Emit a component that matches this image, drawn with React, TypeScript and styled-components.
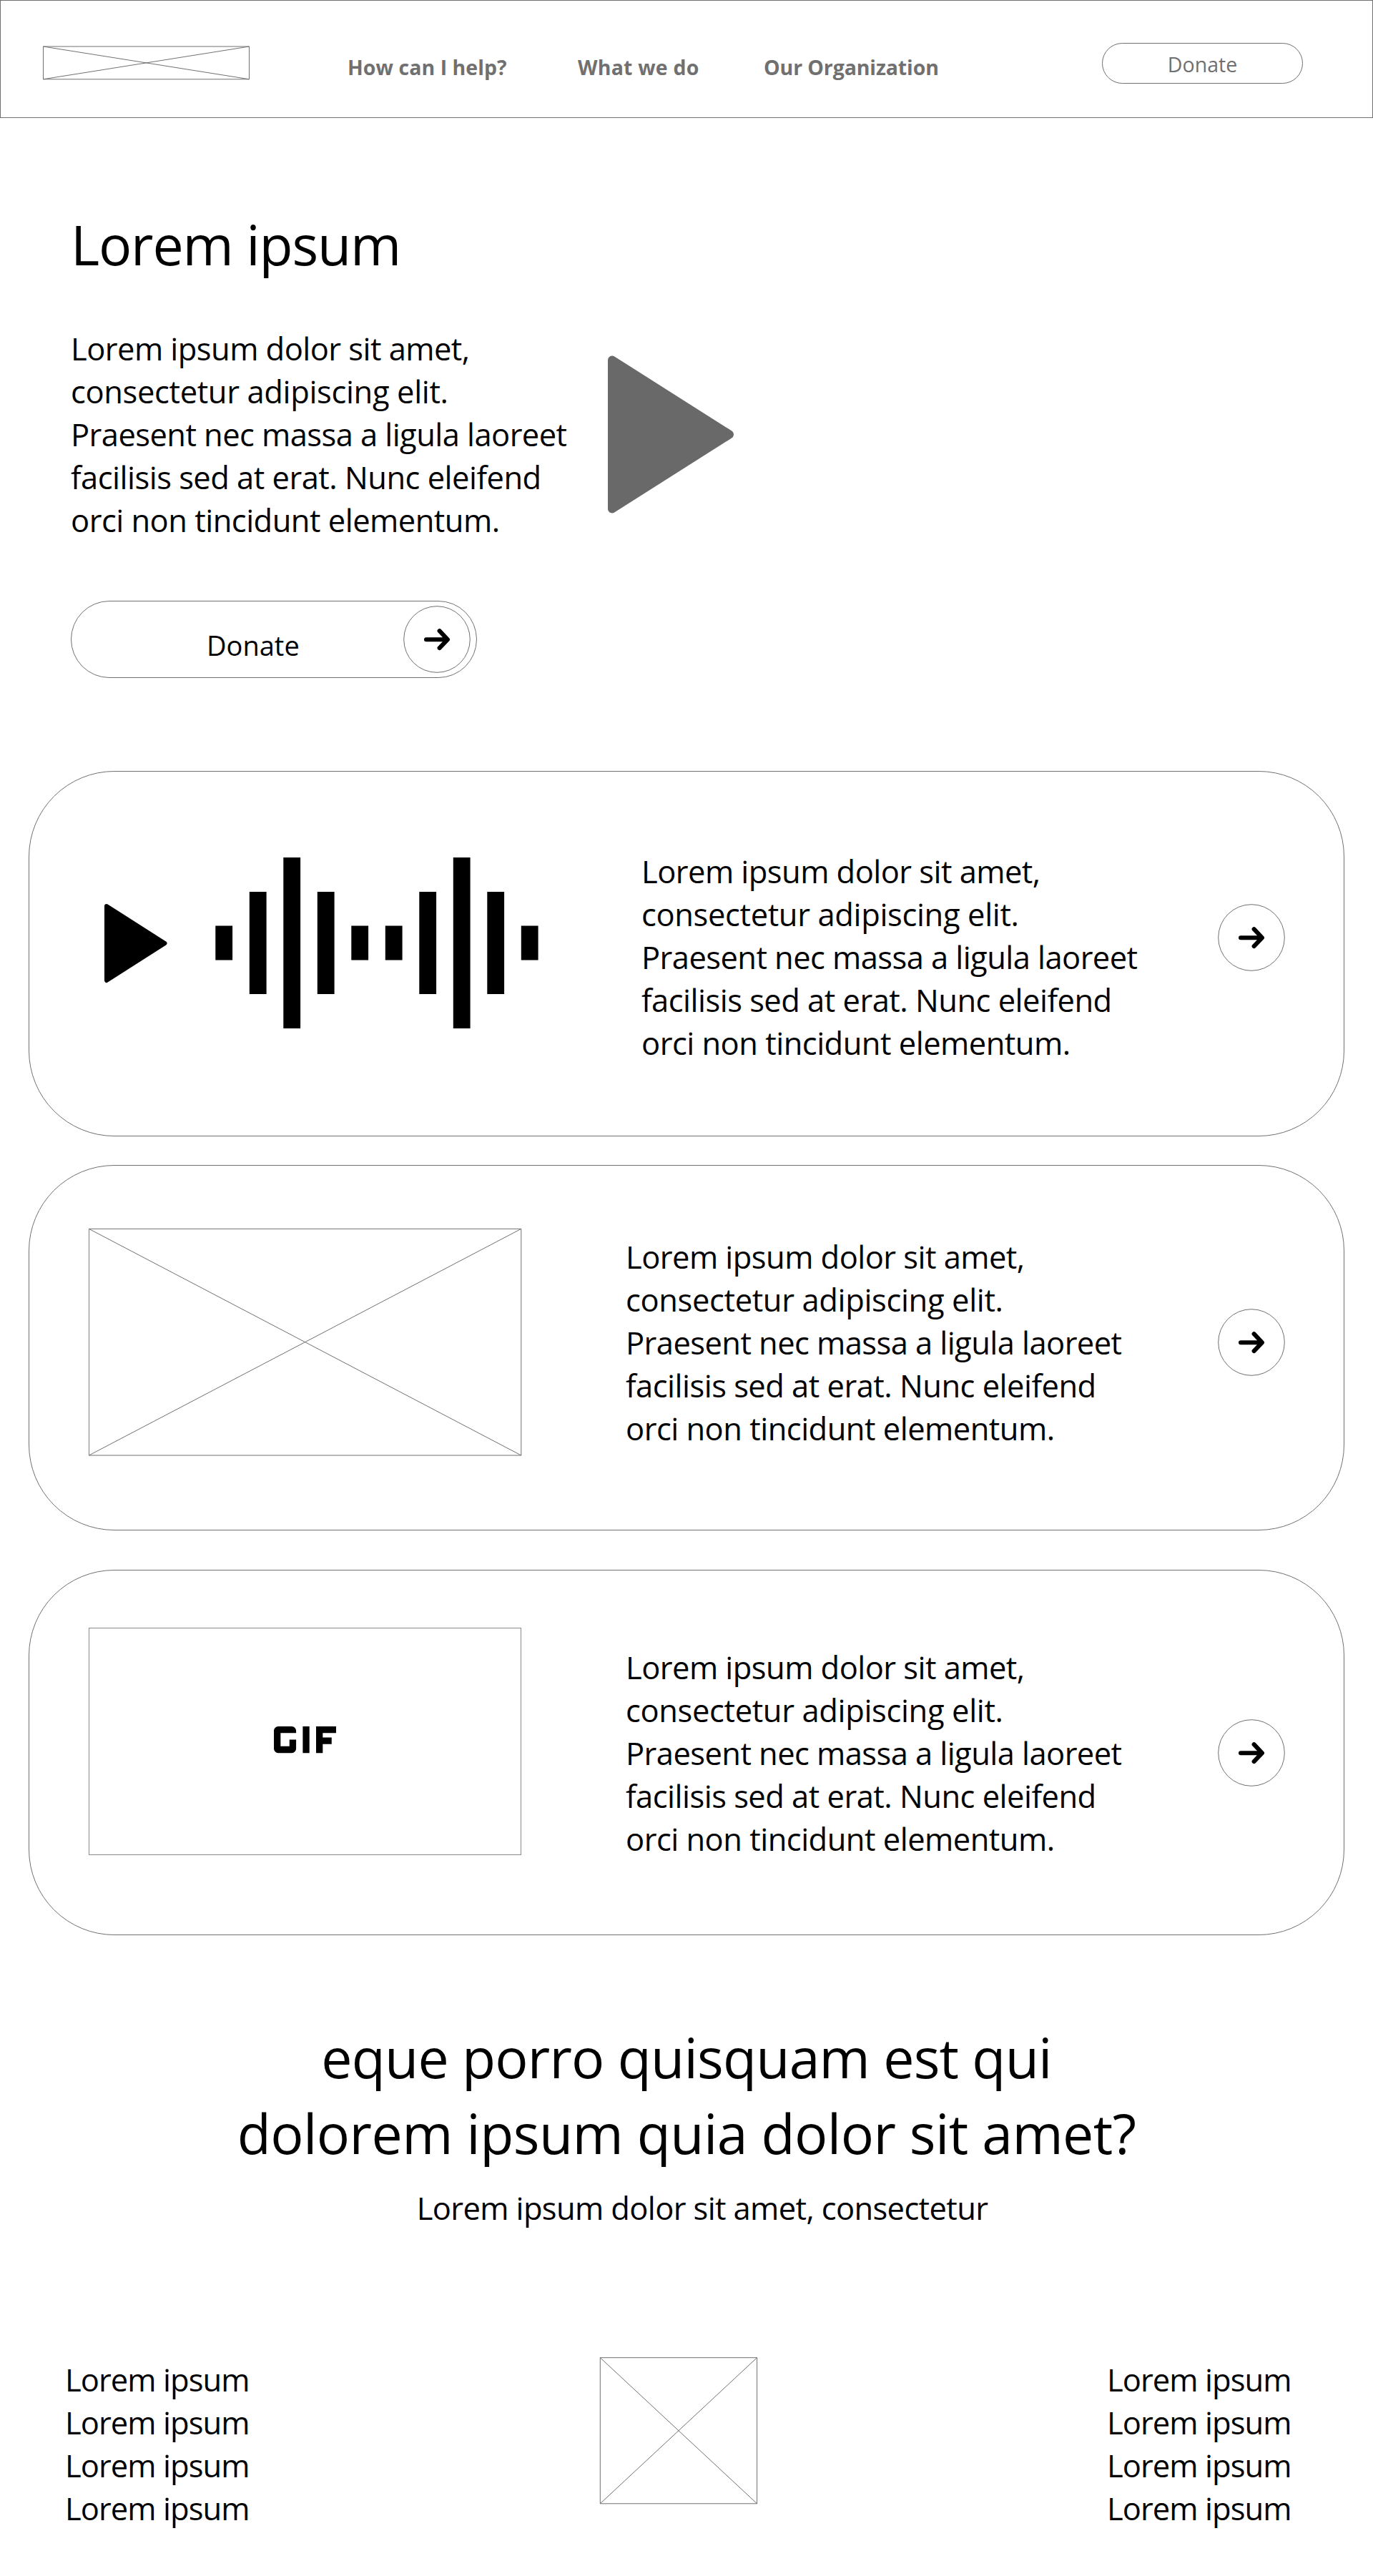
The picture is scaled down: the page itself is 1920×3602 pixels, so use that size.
import React from "react";
import styled, { createGlobalStyle } from "styled-components";
import { MdGif } from "react-icons/md";

const LINE = "#707070";

const GlobalStyle = createGlobalStyle`
  *, *::before, *::after { box-sizing: border-box; }
  body {
    margin: 0;
    background: #fff;
    color: #000;
    font-family: "Open Sans", "Noto Sans", sans-serif;
  }
  h1, h2, p, ul { margin: 0; padding: 0; font-weight: 400; }
  svg { display: block; flex: none; }
`;

const Page = styled.div`
  width: 1920px;
  min-height: 3602px;
  overflow: hidden;
`;

const Header = styled.header`
  display: flex;
  align-items: flex-start;
  height: 165px;
  padding-left: 59px;
  border: 1px solid ${LINE};
`;

const Logo = styled.a`
  margin-top: 63px;
  width: 290px;
`;

const Nav = styled.nav`
  display: grid;
  grid-template-columns: 322px 260px auto;
  width: 1055px;
  margin: 73px 0 0 136px;
`;

const NavLink = styled.a<{ $spacing: number }>`
  font-size: 28.5px;
  font-weight: 700;
  line-height: 40px;
  letter-spacing: ${(p) => p.$spacing}px;
  color: ${LINE};
  white-space: nowrap;
`;

const HeaderDonate = styled.button`
  display: flex;
  justify-content: center;
  align-items: flex-start;
  width: 281px;
  height: 57px;
  margin-top: 59px;
  padding: 9px 0 0;
  border: 1px solid ${LINE};
  border-radius: 29px;
  background: #fff;
  color: ${LINE};
  font: 400 28.5px/40px "Open Sans", "Noto Sans", sans-serif;
`;

const Hero = styled.section`
  padding: 124px 0 0 99px;
`;

const HeroTitle = styled.h1`
  font-size: 77px;
  line-height: 106px;
  letter-spacing: -1.2px;
`;

const HeroRow = styled.div`
  display: flex;
  align-items: flex-start;
  margin-top: 63px;
`;

const HeroCopy = styled.div`
  width: 751px;
`;

const HeroPlay = styled.svg`
  margin-top: 39px;
`;

const DonateButton = styled.button`
  display: flex;
  justify-content: space-between;
  align-items: flex-start;
  width: 568px;
  height: 108px;
  margin-top: 82px;
  padding: 6px 8px 0 189px;
  border: 1px solid ${LINE};
  border-radius: 54px;
  background: #fff;
  color: #000;
  font: 400 38px/52px "Open Sans", "Noto Sans", sans-serif;
`;

const DonateLabel = styled.span`
  margin-top: 29px;
`;

const Body = styled.p`
  font-size: 43.5px;
  line-height: 60px;
`;

const Line = styled.span<{ $spacing: number }>`
  display: block;
  letter-spacing: ${(p) => p.$spacing}px;
  white-space: nowrap;
`;

const Cards = styled.section`
  display: flex;
  flex-direction: column;
  padding: 130px 40px 0;
`;

const Card = styled.article<{ $media: number; $gap?: number }>`
  display: grid;
  grid-template-columns: ${(p) => p.$media}px ${(p) => 1662 - p.$media}px 94px;
  align-items: start;
  height: 511px;
  margin-top: ${(p) => p.$gap ?? 0}px;
  border: 1px solid ${LINE};
  border-radius: 120px;
`;

const CardCell = styled.div<{ $top: number; $left?: number }>`
  display: flex;
  align-items: center;
  padding: ${(p) => p.$top}px 0 0 ${(p) => p.$left ?? 0}px;
`;

const Wave = styled.svg`
  margin-left: 67px;
`;

const GifFrame = styled.div`
  display: flex;
  justify-content: center;
  align-items: center;
  width: 605px;
  height: 318px;
  padding-bottom: 5px;
  border: 1px solid #8a8a8a;
`;

const Closing = styled.section`
  padding-top: 118px;
  text-align: center;
`;

const ClosingTitle = styled.h2`
  font-size: 77px;
  line-height: 106px;
`;

const ClosingText = styled(Body)`
  margin-top: 22px;
  padding-left: 44px;
`;

const Footer = styled.footer`
  display: grid;
  grid-template-columns: 747px 710px auto;
  align-items: start;
  padding: 178px 0 0 91px;
`;

const FooterList = styled.ul`
  list-style: none;
  padding-top: 2px;
  font-size: 43.5px;
  line-height: 60px;
  letter-spacing: -0.94px;
`;

type Box = { width: number; height: number; x1: number; y1: number; x2: number; y2: number };

function Placeholder({ width, height, x1, y1, x2, y2 }: Box) {
  return (
    <svg width={width} height={height} fill="none" stroke={LINE}>
      <path d={`M${x1} ${y1}H${x2}V${y2}H${x1}ZL${x2} ${y2}M${x2} ${y1}L${x1} ${y2}`} />
    </svg>
  );
}

function ArrowRing() {
  return (
    <svg width="94" height="94" viewBox="-47 -47 94 94" fill="none">
      <circle r="46.3" stroke={LINE} />
      <path
        d="M-15 .2H14M3.6 -11.9L15 .2L3.6 12.1"
        stroke="#000"
        strokeWidth="6"
        strokeLinecap="round"
        strokeLinejoin="round"
      />
    </svg>
  );
}

const paragraph: [string, number][] = [
  ["Lorem ipsum dolor sit amet,", -0.55],
  ["consectetur adipiscing elit.", -0.36],
  ["Praesent nec massa a ligula laoreet", -0.57],
  ["facilisis sed at erat. Nunc eleifend", -0.52],
  ["orci non tincidunt elementum.", -0.52],
];

function Paragraph() {
  return (
    <Body>
      {paragraph.map(([text, spacing]) => (
        <Line key={text} $spacing={spacing}>
          {text}
        </Line>
      ))}
    </Body>
  );
}

const bars = [48, 143, 239, 143, 48, 48, 143, 239, 143, 48];

function Waveform() {
  return (
    <Wave width="452" height="239">
      {bars.map((h, i) => (
        <rect key={i} x={0.3 + i * 47.5} y={(239 - h) / 2} width="23.8" height={h} />
      ))}
    </Wave>
  );
}

const links = ["Lorem ipsum", "Lorem ipsum", "Lorem ipsum", "Lorem ipsum"];

function FooterLinks() {
  return (
    <FooterList>
      {links.map((text, i) => (
        <li key={i}>{text}</li>
      ))}
    </FooterList>
  );
}

export default function App() {
  return (
    <Page>
      <GlobalStyle />
      <Header>
        <Logo>
          <Placeholder width={290} height={48} x1={0.5} y1={1} x2={288.5} y2={46.8} />
        </Logo>
        <Nav>
          <NavLink $spacing={0.05}>How can I help?</NavLink>
          <NavLink $spacing={0.2}>What we do</NavLink>
          <NavLink $spacing={-0.12}>Our Organization</NavLink>
        </Nav>
        <HeaderDonate>Donate</HeaderDonate>
      </Header>

      <Hero>
        <HeroTitle>Lorem ipsum</HeroTitle>
        <HeroRow>
          <HeroCopy>
            <Paragraph />
          </HeroCopy>
          <HeroPlay width="178" height="221">
            <path
              d="M6 6.5L170 110.5L6 214.5Z"
              fill="#696969"
              stroke="#696969"
              strokeWidth="12"
              strokeLinejoin="round"
            />
          </HeroPlay>
        </HeroRow>
        <DonateButton>
          <DonateLabel>Donate</DonateLabel>
          <ArrowRing />
        </DonateButton>
      </Hero>

      <Cards>
        <Card $media={856}>
          <CardCell $top={120} $left={105}>
            <svg width="88" height="112">
              <path d="M3 4L84.5 56L3 108Z" stroke="#000" strokeWidth="6" strokeLinejoin="round" />
            </svg>
            <Waveform />
          </CardCell>
          <CardCell $top={110}>
            <Paragraph />
          </CardCell>
          <CardCell $top={185}>
            <ArrowRing />
          </CardCell>
        </Card>

        <Card $media={834} $gap={40}>
          <CardCell $top={87} $left={83}>
            <Placeholder width={606} height={320} x1={0.4} y1={1.3} x2={604.8} y2={318} />
          </CardCell>
          <CardCell $top={98}>
            <Paragraph />
          </CardCell>
          <CardCell $top={200}>
            <ArrowRing />
          </CardCell>
        </Card>

        <Card $media={834} $gap={55}>
          <CardCell $top={80} $left={83}>
            <GifFrame>
              <MdGif size={149} />
            </GifFrame>
          </CardCell>
          <CardCell $top={106}>
            <Paragraph />
          </CardCell>
          <CardCell $top={208}>
            <ArrowRing />
          </CardCell>
        </Card>
      </Cards>

      <Closing>
        <ClosingTitle>
          <Line $spacing={-0.82}>eque porro quisquam est qui</Line>
          <Line $spacing={-0.56}>dolorem ipsum quia dolor sit amet?</Line>
        </ClosingTitle>
        <ClosingText>
          <Line $spacing={-0.63}>Lorem ipsum dolor sit amet, consectetur</Line>
        </ClosingText>
      </Closing>

      <Footer>
        <FooterLinks />
        <Placeholder width={222} height={207} x1={1.3} y1={0.7} x2={220.6} y2={204.8} />
        <FooterLinks />
      </Footer>
    </Page>
  );
}
